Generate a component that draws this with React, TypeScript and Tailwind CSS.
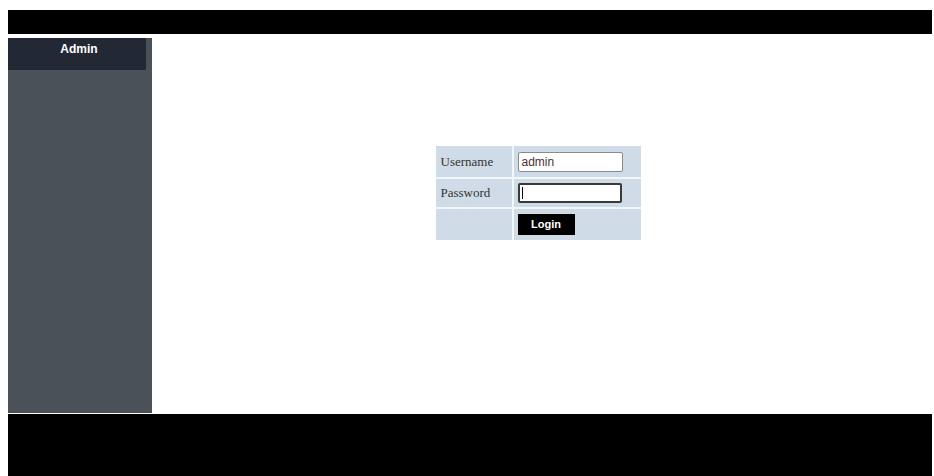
import React from "react";

export default function App() {
  return (
    <div className="w-[934px] h-[476px] bg-white pt-[10px] pl-[8px] pr-[2px] flex flex-col overflow-hidden">
      {/* top banner */}
      <div className="h-[24px] bg-black shrink-0" />

      {/* body: sidebar + content */}
      <div className="mt-[4px] h-[375px] flex shrink-0">
        <aside className="w-[144px] bg-[#4a5159] flex flex-col">
          <div className="w-[138px] h-[32px] bg-[#232934] flex justify-center pt-[3px] pl-[4px]">
            <span className="text-white font-bold text-[12px] leading-[16px] font-['Liberation_Sans',Arial,sans-serif]">
              Admin
            </span>
          </div>
        </aside>

        <main className="flex-1 flex justify-center pt-[108px] pr-[8px]">
          <div className="w-[205px] h-[94px] bg-[#cfdce7] flex flex-col font-['Liberation_Serif','Times_New_Roman',serif] text-[13px] text-[#333]">
            <div className="h-[33px] flex border-b-2 border-[#f2f7fb]">
              <div className="w-[78px] border-r-2 border-[#f2f7fb] flex items-center pl-[5px]">
                Username
              </div>
              <div className="flex-1 flex items-center pl-[4px]">
                <div className="w-[105px] h-[20px] bg-white border border-[#8a8a8a] rounded-[2px] flex items-center pl-[3px] font-['Liberation_Sans',Arial,sans-serif] text-[12px] text-[#4a3030]">
                  admin
                </div>
              </div>
            </div>
            <div className="h-[30px] flex border-b-2 border-[#f2f7fb]">
              <div className="w-[78px] border-r-2 border-[#f2f7fb] flex items-center pl-[5px]">
                Password
              </div>
              <div className="flex-1 flex items-center pl-[4px]">
                <div className="w-[104px] h-[20px] bg-white border-2 border-[#3a3a3a] rounded-[2px] flex items-center pl-[2px]">
                  <span className="w-px h-[12px] bg-black" />
                </div>
              </div>
            </div>
            <div className="flex-1 flex">
              <div className="w-[78px] border-r-2 border-[#f2f7fb]" />
              <div className="flex-1 flex items-center pl-[4px]">
                <div className="w-[57px] h-[21px] bg-black text-white font-bold text-[11px] font-['Liberation_Sans',Arial,sans-serif] flex items-center justify-center">
                  Login
                </div>
              </div>
            </div>
          </div>
        </main>
      </div>

      {/* footer */}
      <div className="mt-[1px] flex-1 bg-black" />
    </div>
  );
}
